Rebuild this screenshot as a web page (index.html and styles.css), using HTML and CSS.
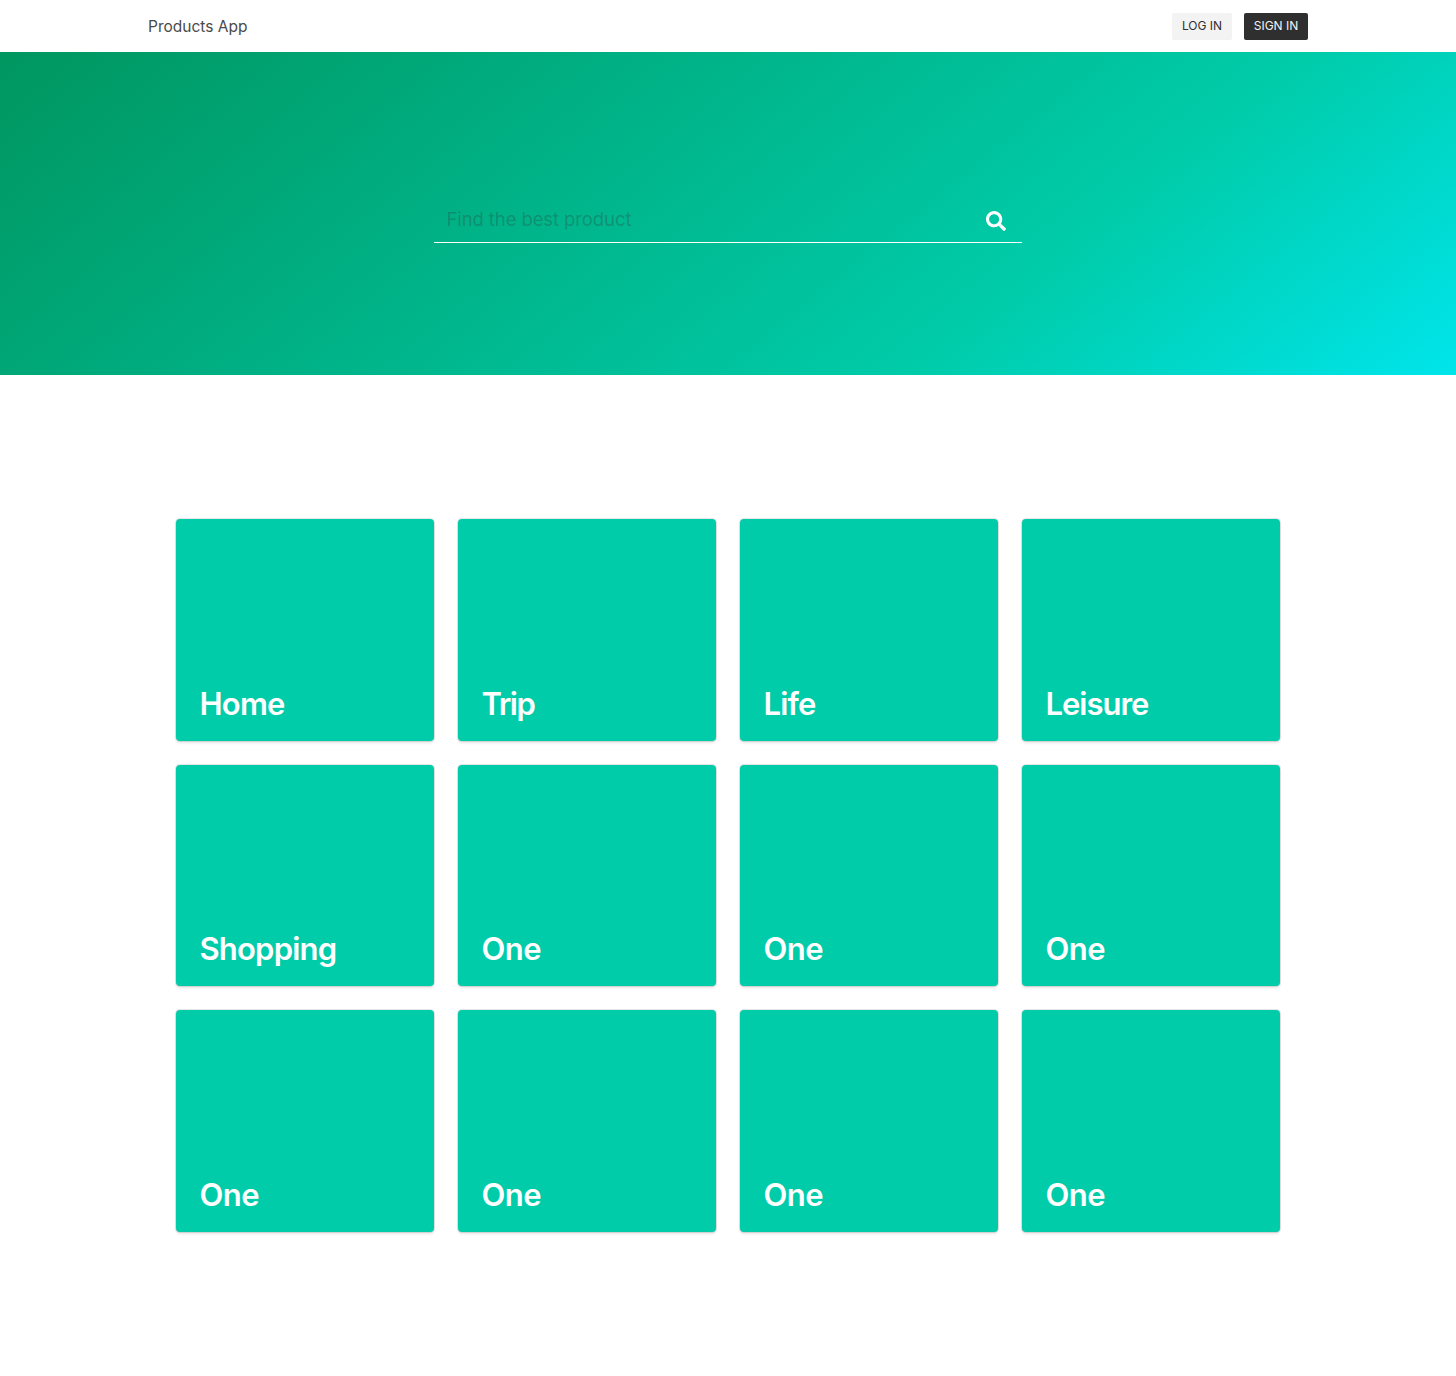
FILE: index.html
```html
<!DOCTYPE html>
<html lang="en">
<head>
<meta charset="utf-8">
<title>Products App</title>
<link rel="stylesheet" href="styles.css">
</head>
<body>
<nav class="navbar">
  <a class="brand">Products App</a>
  <div class="buttons">
    <a class="button light">LOG IN</a>
    <a class="button dark">SIGN IN</a>
  </div>
</nav>
<section class="hero">
  <div class="search">
    <span class="placeholder">Find the best product</span>
    <svg class="icon" viewBox="0 0 512 512"><path fill="#fff" d="M505 442.7L405.300 343c-4.500-4.500-10.600-7-17-7H372c27.600-35.300 44-79.700 44-128C416 93.100 322.900 0 208 0S0 93.100 0 208s93.100 208 208 208c48.300 0 92.700-16.400 128-44v16.300c0 6.400 2.500 12.500 7 17l99.700 99.700c9.400 9.400 24.600 9.400 33.900 0l28.300-28.300c9.400-9.400 9.400-24.600.1-34zM208 336c-70.700 0-128-57.200-128-128 0-70.700 57.200-128 128-128 70.700 0 128 57.200 128 128 0 70.700-57.200 128-128 128z"/></svg>
  </div>
</section>
<main class="grid">
  <a class="card"><span class="home">Home</span></a>
  <a class="card"><span class="trip">Trip</span></a>
  <a class="card"><span class="life">Life</span></a>
  <a class="card"><span class="leisure">Leisure</span></a>
  <a class="card"><span class="shopping">Shopping</span></a>
  <a class="card"><span class="one">One</span></a>
  <a class="card"><span class="one">One</span></a>
  <a class="card"><span class="one">One</span></a>
  <a class="card"><span class="one">One</span></a>
  <a class="card"><span class="one">One</span></a>
  <a class="card"><span class="one">One</span></a>
  <a class="card"><span class="one">One</span></a>
</main>
</body>
</html>
```

FILE: styles.css
```css
* { box-sizing: border-box; }
body {
  margin: 0;
  min-height: 1376px;
  background: #fff;
  color: #4a4a4a;
  font-family: Inter, "Liberation Sans", sans-serif;
}
.navbar {
  display: flex;
  align-items: center;
  justify-content: space-between;
  width: 1160px;
  height: 52px;
  margin: 0 auto;
}
.brand { padding-top: 2px; font-size: 15.5px; line-height: 24px; }
.buttons { display: flex; gap: 12px; padding-top: 1px; }
.button {
  display: flex;
  align-items: center;
  justify-content: center;
  height: 27px;
  border-radius: 2px;
  font-size: 12px;
  line-height: 18px;
  padding-bottom: 1px;
}
.light { width: 60px; background: #f3f3f3; color: #2f2f2f; }
.dark { width: 64px; background: #2f2f2f; color: #f3f3f3; }
.hero {
  display: flex;
  justify-content: center;
  height: 323px;
  padding-top: 146px;
  background: linear-gradient(141deg, #009660 0%, #00ccaa 71%, #00e5eb 100%);
}
.search {
  display: flex;
  align-items: center;
  justify-content: space-between;
  width: 588px;
  height: 45px;
  padding: 0 16px 0 12.5px;
  border-bottom: 1px solid #fff;
}
.placeholder {
  padding-bottom: 2px;
  font-size: 18.5px;
  line-height: 30px;
  letter-spacing: -0.1px;
  color: rgba(54, 54, 54, 0.3);
}
.icon { width: 20px; height: 20px; margin-top: 2px; }
.grid {
  display: grid;
  grid-template-columns: repeat(4, 258px);
  grid-auto-rows: 221.6px;
  gap: 24px;
  width: 1104px;
  margin: 144px auto 0;
}
.card {
  display: flex;
  align-items: flex-end;
  padding: 0 23.5px 19px;
  border-radius: 4px;
  background: #00ccaa;
  box-shadow: 0 2px 3px rgba(10, 10, 10, 0.1), 0 0 0 1px rgba(10, 10, 10, 0.1);
  color: #fff;
  font-size: 31px;
  font-weight: 600;
  line-height: 36px;
}
.home { letter-spacing: -0.8px; }
.trip { letter-spacing: -1.5px; }
.life { letter-spacing: -0.85px; }
.leisure { letter-spacing: -1px; }
.shopping { letter-spacing: -0.8px; }
.one { letter-spacing: -0.5px; }
```
